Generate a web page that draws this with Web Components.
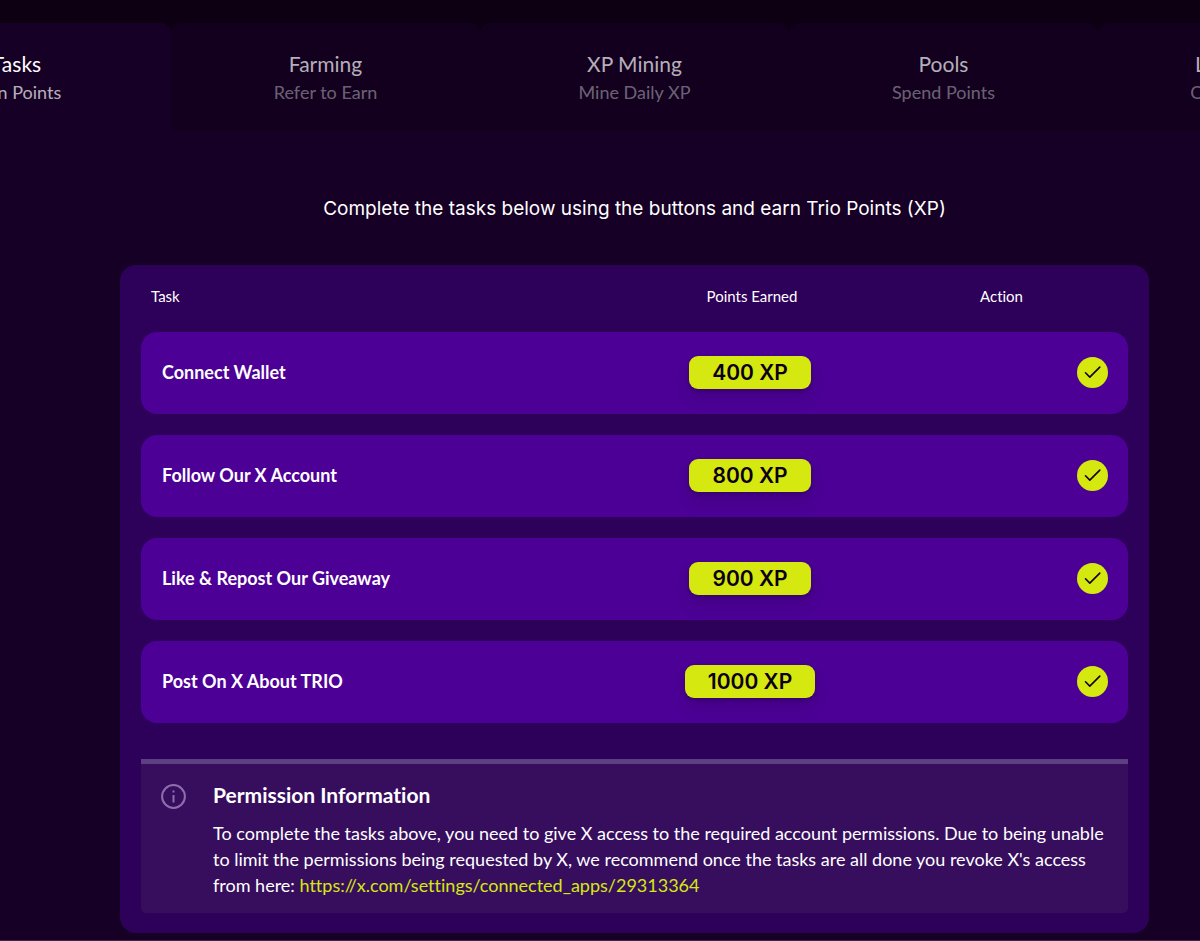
<!DOCTYPE html>
<html lang="en">
<head>
<meta charset="utf-8">
<title>Trio Points</title>
<style>
  body {
    margin: 0;
    background: #160025;
    color: #fff;
    font-family: Lato, "Liberation Sans", sans-serif;
    font-variant-ligatures: none;
  }
</style>
</head>
<body>
<points-page>
  <points-tab slot="tabs" active><span>Tasks</span><span slot="note">Earn Points</span></points-tab>
  <points-tab slot="tabs"><span>Farming</span><span slot="note">Refer to Earn</span></points-tab>
  <points-tab slot="tabs"><span>XP Mining</span><span slot="note">Mine Daily XP</span></points-tab>
  <points-tab slot="tabs"><span>Pools</span><span slot="note">Spend Points</span></points-tab>
  <points-tab slot="tabs"><span>Leaderboard</span><span slot="note">Overall Ranking</span></points-tab>
  <span slot="intro">Complete the tasks below using the buttons and earn Trio Points (XP)</span>
  <task-table></task-table>
  <info-notice>
    <span slot="title">Permission Information</span>
    To complete the tasks above, you need to give X access to the required account permissions. Due to being unable to limit the permissions being requested by X, we recommend once the tasks are all done you revoke X's access
    <span>from here: </span><notice-link url="https://x.com/settings/connected_apps/29313364"></notice-link>
  </info-notice>
</points-page>

<script>
class PointsPage extends HTMLElement {
  constructor() {
    super();
    this.attachShadow({ mode: 'open' });
    this.shadowRoot.innerHTML = `
      <style>
        :host {
          display: block;
          overflow: hidden;
          border-bottom: 1px solid #3b2a48;
        }
        nav {
          display: flex;
          justify-content: center;
          padding: 23px 0 0 69px;
          background: linear-gradient(#0e0013 36px, transparent 36px);
        }
        main {
          padding: 64px 51px 7px 120px;
        }
        .intro {
          margin: 0 0 42px;
          font-family: Inter, "Liberation Sans", sans-serif;
          font-size: 19px;
          line-height: 28px;
          font-weight: 400;
          text-align: center;
        }
        .panel {
          max-width: 1029px;
          box-sizing: border-box;
          margin: 0 auto;
          padding: 0 21px 20px;
          border-radius: 16px;
          background: #2d005a;
        }
      </style>
      <nav><slot name="tabs"></slot></nav>
      <main>
        <h1 class="intro"><slot name="intro"></slot></h1>
        <section class="panel"><slot></slot></section>
      </main>
    `;
  }
}

class PointsTab extends HTMLElement {
  constructor() {
    super();
    this.attachShadow({ mode: 'open' });
    this.shadowRoot.innerHTML = `
      <style>
        :host {
          display: block;
          flex: none;
          width: 309px;
        }
        button {
          display: flex;
          flex-direction: column;
          align-items: center;
          width: 100%;
          padding: 27px 0 25px;
          border: 0;
          border-radius: 10px 10px 0 0;
          background: #12001e;
          color: rgba(255, 255, 255, 0.7);
          font: inherit;
          font-variant-ligatures: none;
          font-size: 21px;
          line-height: 28px;
          cursor: pointer;
        }
        .note {
          font-size: 18px;
          color: rgba(255, 255, 255, 0.4);
        }
        :host([active]) button {
          background: #160025;
          color: #fff;
        }
        :host([active]) .note {
          color: rgba(255, 255, 255, 0.7);
        }
      </style>
      <button type="button">
        <slot></slot>
        <span class="note"><slot name="note"></slot></span>
      </button>
    `;
  }
}

class XpBadge extends HTMLElement {
  constructor() {
    super();
    this.attachShadow({ mode: 'open' });
    this.shadowRoot.innerHTML = `
      <style>
        :host {
          display: inline-block;
          padding: 0 23px;
          border-radius: 9px;
          background: #d5e80f;
          color: #0b0014;
          font-family: Inter, "Liberation Sans", sans-serif;
          font-size: 21px;
          line-height: 33px;
          font-weight: 600;
          box-shadow: 0 10px 15px rgba(0, 0, 0, 0.1), 0 2px 5px rgba(0, 0, 0, 0.2);
        }
      </style>
      <slot></slot>
    `;
  }
}

class DoneCheck extends HTMLElement {
  constructor() {
    super();
    this.attachShadow({ mode: 'open' });
    this.shadowRoot.innerHTML = `
      <style>
        :host {
          display: inline-block;
          vertical-align: middle;
        }
        svg {
          display: block;
        }
      </style>
      <svg width="31" height="31" viewBox="0 0 31 31" role="img" aria-label="Completed">
        <circle cx="15.5" cy="15.5" r="15.5" fill="#d5e80f"/>
        <path d="M8.5 15.8l4.3 4.3L22.8 10.1" fill="none" stroke="#14001f" stroke-width="1.6" stroke-linecap="round" stroke-linejoin="round"/>
      </svg>
    `;
  }
}

class TaskTable extends HTMLElement {
  constructor() {
    super();
    this.attachShadow({ mode: 'open' });
    this.tasks = [
      { name: 'Connect Wallet', points: 400 },
      { name: 'Follow Our X Account', points: 800 },
      { name: 'Like &amp; Repost Our Giveaway', points: 900 },
      { name: 'Post On X About TRIO', points: 1000 }
    ];
    this.render();
  }

  render() {
    const rows = this.tasks.map(task => `
      <tr>
        <td>${task.name}</td>
        <td class="points"><xp-badge>${task.points} XP</xp-badge></td>
        <td class="action"><done-check></done-check></td>
      </tr>
    `).join('');

    this.shadowRoot.innerHTML = `
      <style>
        :host {
          display: block;
        }
        table {
          width: 100%;
          table-layout: fixed;
          border-collapse: separate;
          border-spacing: 0 21px;
        }
        th {
          height: 25px;
          padding: 0 0 0 4px;
          font-size: 15px;
          line-height: 20px;
          font-weight: 400;
          vertical-align: top;
        }
        th:first-child {
          padding-left: 10px;
          text-align: left;
        }
        .col-points {
          width: 242px;
        }
        .col-action {
          width: 257px;
        }
        td {
          box-sizing: border-box;
          height: 82px;
          padding: 0 0 2px;
          background: #4c0096;
          font-size: 18px;
          font-weight: 700;
        }
        td:first-child {
          padding-left: 21px;
          border-radius: 16px 0 0 16px;
        }
        td:last-child {
          padding-right: 20px;
          border-radius: 0 16px 16px 0;
        }
        .points {
          text-align: center;
        }
        .action {
          text-align: right;
        }
      </style>
      <table>
        <colgroup><col><col class="col-points"><col class="col-action"></colgroup>
        <thead>
          <tr><th scope="col">Task</th><th scope="col">Points Earned</th><th scope="col">Action</th></tr>
        </thead>
        <tbody>${rows}</tbody>
      </table>
    `;
  }
}

class InfoNotice extends HTMLElement {
  constructor() {
    super();
    this.attachShadow({ mode: 'open' });
    this.shadowRoot.innerHTML = `
      <style>
        :host {
          display: flex;
          gap: 26px;
          margin-top: 15px;
          padding: 18px 20px 15px;
          border-top: 5px solid #5f3f84;
          border-radius: 0 0 5px 5px;
          background: #370e5e;
        }
        svg {
          flex: none;
          margin-top: 2px;
        }
        h2 {
          margin: 0 0 12px;
          font-size: 21px;
          line-height: 26px;
          font-weight: 700;
        }
        p {
          margin: 0;
          font-size: 18px;
          line-height: 26px;
        }
      </style>
      <svg width="26" height="26" viewBox="0 0 26 26" fill="none" stroke="#8d6fac" aria-hidden="true">
        <circle cx="12.5" cy="12.5" r="11.4" stroke-width="2"/>
        <path d="M12.5 11v7.5" stroke-width="2"/>
        <path d="M12.5 6.5v2" stroke-width="2"/>
      </svg>
      <div>
        <h2><slot name="title"></slot></h2>
        <p><slot></slot></p>
      </div>
    `;
  }
}

class NoticeLink extends HTMLElement {
  constructor() {
    super();
    this.attachShadow({ mode: 'open' });
  }

  connectedCallback() {
    const url = this.getAttribute('url');
    this.shadowRoot.innerHTML = `
      <style>
        :host {
          display: inline-block;
        }
        a {
          color: #d5e80f;
          text-decoration: none;
        }
      </style>
      <a href="${url}">${url}</a>
    `;
  }
}

customElements.define('points-page', PointsPage);
customElements.define('points-tab', PointsTab);
customElements.define('xp-badge', XpBadge);
customElements.define('done-check', DoneCheck);
customElements.define('task-table', TaskTable);
customElements.define('info-notice', InfoNotice);
customElements.define('notice-link', NoticeLink);
</script>
</body>
</html>
